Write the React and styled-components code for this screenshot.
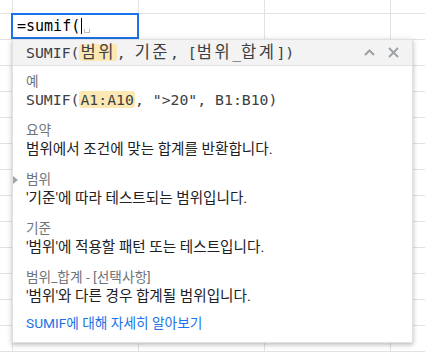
import React from "react";
import styled, { createGlobalStyle } from "styled-components";

const GlobalStyle = createGlobalStyle`
  html, body { margin: 0; padding: 0; background: #ffffff; }
  * { box-sizing: border-box; }
`;

const Sheet = styled.div`
  position: relative;
  width: 425px;
  height: 353px;
  overflow: hidden;
  background: #fff;
`;

const Grid = styled.div`
  display: grid;
  grid-template-columns: 13px repeat(4, 126px);
  grid-template-rows: 14px repeat(13, 26px);
`;

const Cell = styled.div`
  border-right: 1px solid #e2e2e2;
  border-bottom: 1px solid #e2e2e2;
`;

const Editor = styled.div`
  position: absolute;
  left: 11px;
  top: 13px;
  width: 128px;
  height: 26px;
  border: 2px solid #1a73e8;
  background: #fff;
  display: flex;
  align-items: center;
  padding-left: 4px;
  font-family: "DejaVu Sans Mono", "Liberation Mono", monospace;
  font-size: 15px;
  color: #000;
`;

const Caret = styled.span`
  display: inline-block;
  width: 1px;
  height: 16px;
  background: #000;
  margin-left: 1px;
`;

const Ghost = styled.span`
  display: inline-block;
  width: 6px;
  height: 4px;
  margin-left: 2px;
  margin-top: 9px;
  border: 1px solid #b8bcc0;
  border-top: none;
`;

const Popup = styled.div`
  position: absolute;
  left: 12px;
  top: 39px;
  width: 401px;
  background: #fff;
  border: 1px solid #e0e0e0;
  box-shadow: 0 2px 4px rgba(60, 64, 67, 0.25), 0 1px 6px rgba(60, 64, 67, 0.12);
`;

const Header = styled.div`
  display: flex;
  align-items: center;
  justify-content: space-between;
  height: 26px;
  padding: 0 13px 0 13px;
  background: #f3f3f3;
  border-bottom: 1px solid #e3e3e3;
`;

const Mono = styled.div`
  font-family: "DejaVu Sans Mono", "Noto Sans CJK KR", monospace;
  font-size: 14.8px;
  line-height: 20px;
  color: #3c4043;
  white-space: nowrap;
`;

const Kr = styled.span`
  font-size: 16.5px;
  letter-spacing: 2.5px;
`;

const Hl = styled.span`
  background: #fce8b2;
  border-radius: 3px;
  padding: 0 1px;
`;

const Icons = styled.div`
  display: flex;
  align-items: center;
  gap: 13px;
  color: #9aa0a6;
`;

const Body = styled.div`
  padding: 6px 13px 9px 13px;
  font-family: Roboto, "Noto Sans CJK KR", sans-serif;
  font-size: 13.7px;
`;

const Section = styled.div`
  position: relative;
  margin-bottom: 11px;
`;

const Label = styled.div`
  line-height: 18px;
  color: #70757a;
`;

const Text = styled.div`
  line-height: 20px;
  font-size: 14.6px;
  color: #202124;
`;

const Marker = styled.span`
  position: absolute;
  left: -13px;
  top: 6px;
  width: 0;
  height: 0;
  border-top: 4px solid transparent;
  border-bottom: 4px solid transparent;
  border-left: 5px solid #a0a4a8;
`;

const Link = styled.a`
  display: block;
  margin-top: -4px;
  line-height: 20px;
  color: #1a73e8;
  text-decoration: none;
`;

const sections = [
  { label: "요약", text: "범위에서 조건에 맞는 합계를 반환합니다." },
  { label: "범위", text: "'기준'에 따라 테스트되는 범위입니다.", marker: true },
  { label: "기준", text: "'범위'에 적용할 패턴 또는 테스트입니다." },
  { label: "범위_합계 - [선택사항]", text: "'범위'와 다른 경우 합계될 범위입니다." },
];

export default function App() {
  const cells = Array.from({ length: 5 * 14 });
  return (
    <>
      <GlobalStyle />
      <Sheet>
        <Grid>
          {cells.map((_, i) => (
            <Cell key={i} />
          ))}
        </Grid>
        <Editor>
          =sumif(
          <Caret />
          <Ghost />
        </Editor>
        <Popup>
          <Header>
            <Mono>
              SUMIF(<Hl><Kr>범위</Kr></Hl>, <Kr>기준</Kr>, [<Kr>범위</Kr>_<Kr>합계</Kr>])
            </Mono>
            <Icons>
              <svg width="11" height="7" viewBox="0 0 11 7">
                <path d="M1 6 L5.5 1.5 L10 6" fill="none" stroke="currentColor" strokeWidth="2" />
              </svg>
              <svg width="11" height="11" viewBox="0 0 11 11">
                <path d="M1 1 L10 10 M10 1 L1 10" fill="none" stroke="currentColor" strokeWidth="1.8" />
              </svg>
            </Icons>
          </Header>
          <Body>
            <Section>
              <Label>예</Label>
              <Mono>
                SUMIF(<Hl>A1:A10</Hl>, "&gt;20", B1:B10)
              </Mono>
            </Section>
            {sections.map((s) => (
              <Section key={s.label}>
                {s.marker && <Marker />}
                <Label>{s.label}</Label>
                <Text>{s.text}</Text>
              </Section>
            ))}
            <Link href="#">SUMIF에 대해 자세히 알아보기</Link>
          </Body>
        </Popup>
      </Sheet>
    </>
  );
}
